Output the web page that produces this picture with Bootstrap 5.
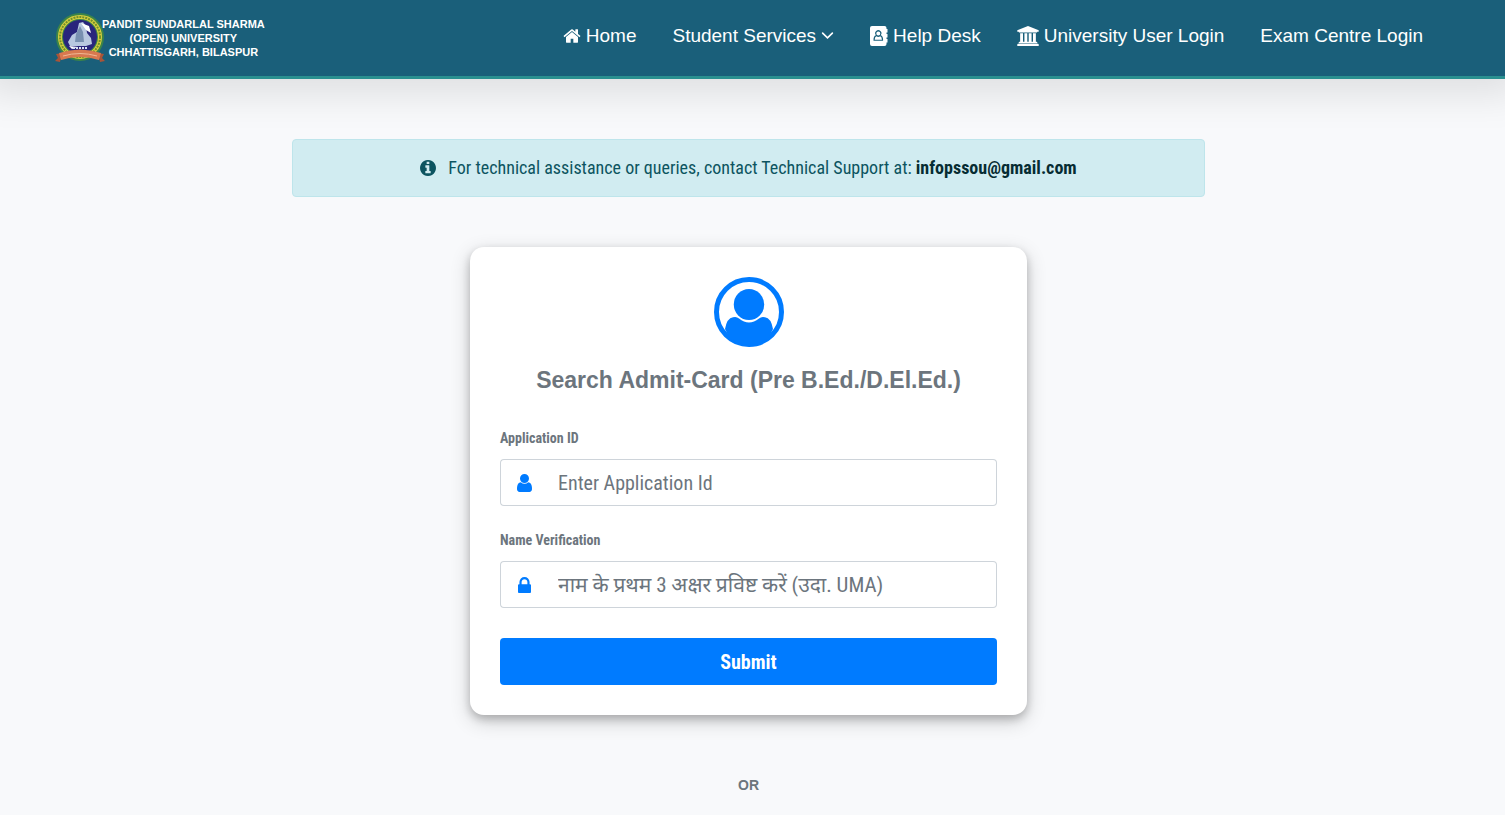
<!DOCTYPE html>
<html lang="en">
<head>
<meta charset="utf-8">
<meta name="viewport" content="width=device-width, initial-scale=1">
<title>Search Admit-Card</title>
<link href="https://cdn.jsdelivr.net/npm/bootstrap@5.3.0/dist/css/bootstrap.min.css" rel="stylesheet">
<style>
  :root { --brand: #007bff; --muted: #6c757d; }
  body {
    background: #f8f9fb;
    color: var(--muted);
    font-family: "Roboto Condensed", "Liberation Sans Narrow", Roboto, "Noto Sans Devanagari", sans-serif;
  }
  svg { fill: currentColor; flex: none; }
  .site-header {
    background: #1a5f7a;
    border-bottom: 3px solid #2a9090;
    box-shadow: 0 0 36px 16px rgba(0, 0, 0, .1);
    font-family: "Liberation Sans", Arial, sans-serif;
    height: 79px;
    padding: 0 64px 0 54px;
  }
  .brand-name { color: #fff; font-size: 11px; font-weight: 700; line-height: 14px; margin-left: -4px; }
  .main-nav { margin-bottom: 5px; }
  .main-nav .nav-link { color: #fff; font-size: 19px; line-height: 24px; padding: 8px 18px; gap: 5px; }
  .page-area { padding: 60px 8px 0 0; }
  .support-note {
    background: #d1ecf1; border-color: #bee5eb; color: #0c5460;
    border-radius: 4px; font-size: 18px; line-height: 24px; width: 61%; gap: 12px;
  }
  .support-note a { color: #062c33; font-weight: 700; text-decoration: none; }
  .search-card {
    background: #fff; border-radius: 14px; max-width: 557px; padding: 30px; margin-top: 50px;
    box-shadow: 0 4px 8px rgba(0, 0, 0, .2), 0 6px 20px rgba(0, 0, 0, .19);
  }
  .search-card h1 { font: 700 23px/30px "Liberation Sans", Arial, sans-serif; margin: 18px 0 32px; }
  .search-card label { font-size: 14px; font-weight: 700; line-height: 22px; margin-bottom: 10px; }
  .field-box { margin-bottom: 23px; }
  .search-card .input-group-text { background: #fff; border-color: #ced4da; border-right: 0; border-radius: 4px; color: var(--brand); width: 47px; }
  .search-card .form-control { border-color: #ced4da; border-left: 0; border-radius: 4px; font-size: 20px; line-height: 30px; height: 47px; }
  .search-card .form-control::placeholder { color: var(--muted); }
  .search-card .form-control:lang(hi) { font-size: 21px; }
  .btn-submit { background: var(--brand); color: #fff; font-size: 20px; font-weight: 700; height: 47px; border-radius: 4px; margin-top: 7px; }
  .or-label { font: 700 14px/20px "Liberation Sans", Arial, sans-serif; margin: 60px 0 0; }
</style>
</head>
<body>
<header class="site-header d-flex align-items-center justify-content-between">
  <a href="#" class="d-flex align-items-center text-decoration-none">
    <svg width="52" height="52" viewBox="0 0 52 52" aria-hidden="true">
      <circle cx="26" cy="25" r="24" fill="#3c8448"/>
      <circle cx="26" cy="25" r="20" fill="none" stroke="#d8cf3e" stroke-width="4"/>
      <circle cx="26" cy="25" r="20" fill="none" stroke="#70902c" stroke-width="2" stroke-dasharray="2 1"/>
      <circle cx="26" cy="25" r="17" fill="#29257c"/>
      <path fill="#b8c8e0" d="M14 30l4-7 5-3 2-9 4-1 3 4 1 7 4 5 1 6-6 2H16z"/>
      <path fill="#7890b0" d="M22 22l4-8 3 6 1 10h-9z"/>
      <path fill="#fff" d="M27 11l8 3 2 7-5-3zM15 34l9 1-6 2z"/>
      <path stroke="#dbe3f5" stroke-width="2" stroke-dasharray="2 1" d="M19 36h15"/>
      <path fill="#a95438" d="M2 42l6-1-2 9-5-1 3-3zM50 42l-6-1 2 9 5-1-3-3z"/>
      <path fill="#d87850" d="M5 41q21-7 42 0l-2 7q-19-6-38 0z"/>
      <path fill="none" stroke="#f0b894" stroke-width="1" d="M9 44q17-5 34 0"/>
    </svg>
    <span class="brand-name text-center">PANDIT SUNDARLAL SHARMA<br>(OPEN) UNIVERSITY<br>CHHATTISGARH, BILASPUR</span>
  </a>
  <nav class="nav main-nav" aria-label="Main">
    <a class="nav-link d-flex align-items-center" href="#">
      <svg width="18" height="16" viewBox="0 0 1664 1536" aria-hidden="true"><path transform="matrix(1 0 0 -1 0 1408)" d="M1408 544v-480q0 -26 -19 -45t-45 -19h-384v384h-256v-384h-384q-26 0 -45 19t-19 45v480q0 1 0.500 3t0.500 3l575 474l575 -474q1 -2 1 -6zM1631 613l-62 -74q-8 -9 -21 -11h-3q-13 0 -21 7l-692 577l-692 -577q-12 -8 -24 -7q-13 2 -21 11l-62 74q-8 10 -7 23.500t11 21.500l719 599q32 26 76 26t76 -26l244 -204v195q0 14 9 23t23 9h192q14 0 23 -9t9 -23v-408l219 -182q10 -8 11 -21.500t-7 -23.500z"/></svg>
      Home</a>
    <a class="nav-link d-flex align-items-center" href="#">Student Services
      <svg width="13" height="13" viewBox="0 0 16 16" aria-hidden="true"><path d="M2 5L8 11L14 5" fill="none" stroke="currentColor" stroke-width="2" stroke-linecap="round"/></svg></a>
    <a class="nav-link d-flex align-items-center" href="#">
      <svg width="18" height="20" viewBox="0 0 18 20" aria-hidden="true"><path fill-rule="evenodd" d="M2 0H14.500Q16.500 0 16.500 2V3H17.500V6.500H16.500V8H17.500V11.500H16.500V13H17.500V16.500H16.500V18Q16.500 20 14.500 20H2Q0 20 0 18V2Q0 0 2 0ZM3.500 14.800H13.100Q13.300 9.800 10.700 9.300A3.100 3.100 0 1 0 5.900 9.300Q3.300 9.800 3.500 14.800ZM8.300 5.400A2 2 0 1 1 8.300 9.400A2 2 0 1 1 8.300 5.400ZM4.700 13.800Q4.700 10.800 6.300 10.300Q8.300 11.600 10.300 10.300Q11.900 10.800 11.900 13.800Z"/></svg>
      Help Desk</a>
    <a class="nav-link d-flex align-items-center" href="#">
      <svg width="22" height="20" viewBox="0 0 1920 1792" aria-hidden="true"><path transform="matrix(1 0 0 -1 0 1536)" d="M960 1536l960 -384v-128h-128q0 -26 -20.500 -45t-48.500 -19h-1526q-28 0 -48.500 19t-20.500 45h-128v128zM256 896h256v-768h128v768h256v-768h128v768h256v-768h128v768h256v-768h59q28 0 48.500 -19t20.500 -45v-64h-1664v64q0 26 20.500 45t48.500 19h59v768zM1851 -64q28 0 48.500 -19t20.500 -45v-128h-1920v128q0 26 20.500 45t48.500 19h1782z"/></svg>
      University User Login</a>
    <a class="nav-link" href="#">Exam Centre Login</a>
  </nav>
</header>
<main class="page-area d-flex flex-column align-items-center">
  <div class="alert support-note d-flex align-items-center justify-content-center mb-0" role="alert">
    <svg width="16" height="16" viewBox="0 0 1536 1536" aria-hidden="true"><path transform="matrix(1 0 0 -1 0 1408)" d="M1024 160v160q0 14 -9 23t-23 9h-96v512q0 14 -9 23t-23 9h-320q-14 0 -23 -9t-9 -23v-160q0 -14 9 -23t23 -9h96v-320h-96q-14 0 -23 -9t-9 -23v-160q0 -14 9 -23t23 -9h448q14 0 23 9t9 23zM896 1056v160q0 14 -9 23t-23 9h-192q-14 0 -23 -9t-9 -23v-160q0 -14 9 -23t23 -9h192q14 0 23 9t9 23zM1536 640q0 -209 -103 -385.500t-279.500 -279.500t-385.500 -103t-385.500 103t-279.500 279.500t-103 385.500t103 385.500t279.500 279.500t385.500 103t385.500 -103t279.500 -279.500t103 -385.500z"/></svg>
    <span>For technical assistance or queries, contact Technical Support at: <a href="mailto:infopssou@gmail.com">infopssou@gmail.com</a></span>
  </div>
  <form class="search-card w-100">
    <div class="text-center">
      <svg width="70" height="70" viewBox="0 0 70 70" color="#007bff" aria-hidden="true">
        <circle cx="35" cy="35" r="32.500" fill="none" stroke="currentColor" stroke-width="5"/>
        <ellipse cx="35" cy="27.500" rx="15.200" ry="15.500"/>
        <path d="M11 52Q13 41 19 40.300Q22.500 39.300 25 41.500Q35 49.500 45 41.500Q47.500 39.300 51 40.300Q57 41 59 52L55 60Q35 76 15 60Z"/>
      </svg>
      <h1>Search Admit-Card (Pre B.Ed./D.El.Ed.)</h1>
    </div>
    <label class="d-block" for="appId">Application ID</label>
    <div class="input-group field-box">
      <span class="input-group-text justify-content-center"><svg width="15" height="18" viewBox="0 0 1280 1536" aria-hidden="true"><path transform="matrix(1 0 0 -1 0 1408)" d="M1280 137q0 -109 -62.500 -187t-150.500 -78h-854q-88 0 -150.500 78t-62.500 187q0 85 8.500 160.500t31.500 152t58.500 131t94 89t134.500 34.500q131 -128 313 -128t313 128q76 0 134.500 -34.500t94 -89t58.500 -131t31.500 -152t8.500 -160.500zM1024 1024q0 -159 -112.500 -271.500t-271.500 -112.500t-271.500 112.500t-112.500 271.500t112.500 271.500t271.500 112.500t271.500 -112.500t112.500 -271.500z"/></svg></span>
      <input class="form-control" id="appId" type="text" placeholder="Enter Application Id">
    </div>
    <label class="d-block" for="nameCheck">Name Verification</label>
    <div class="input-group field-box">
      <span class="input-group-text justify-content-center"><svg width="13" height="16" viewBox="0 0 1152 1408" aria-hidden="true"><path transform="matrix(1 0 0 -1 0 1408)" d="M320 768h512v192q0 106 -75 181t-181 75t-181 -75t-75 -181v-192zM1152 672v-576q0 -40 -28 -68t-68 -28h-960q-40 0 -68 28t-28 68v576q0 40 28 68t68 28h32v192q0 184 132 316t316 132t316 -132t132 -316v-192h32q40 0 68 -28t28 -68z"/></svg></span>
      <input class="form-control" id="nameCheck" type="text" lang="hi" placeholder="नाम के प्रथम 3 अक्षर प्रविष्ट करें (उदा. UMA)">
    </div>
    <button class="btn btn-submit w-100" type="submit">Submit</button>
  </form>
  <p class="or-label">OR</p>
</main>
<script src="https://cdn.jsdelivr.net/npm/bootstrap@5.3.0/dist/js/bootstrap.bundle.min.js"></script>
</body>
</html>
